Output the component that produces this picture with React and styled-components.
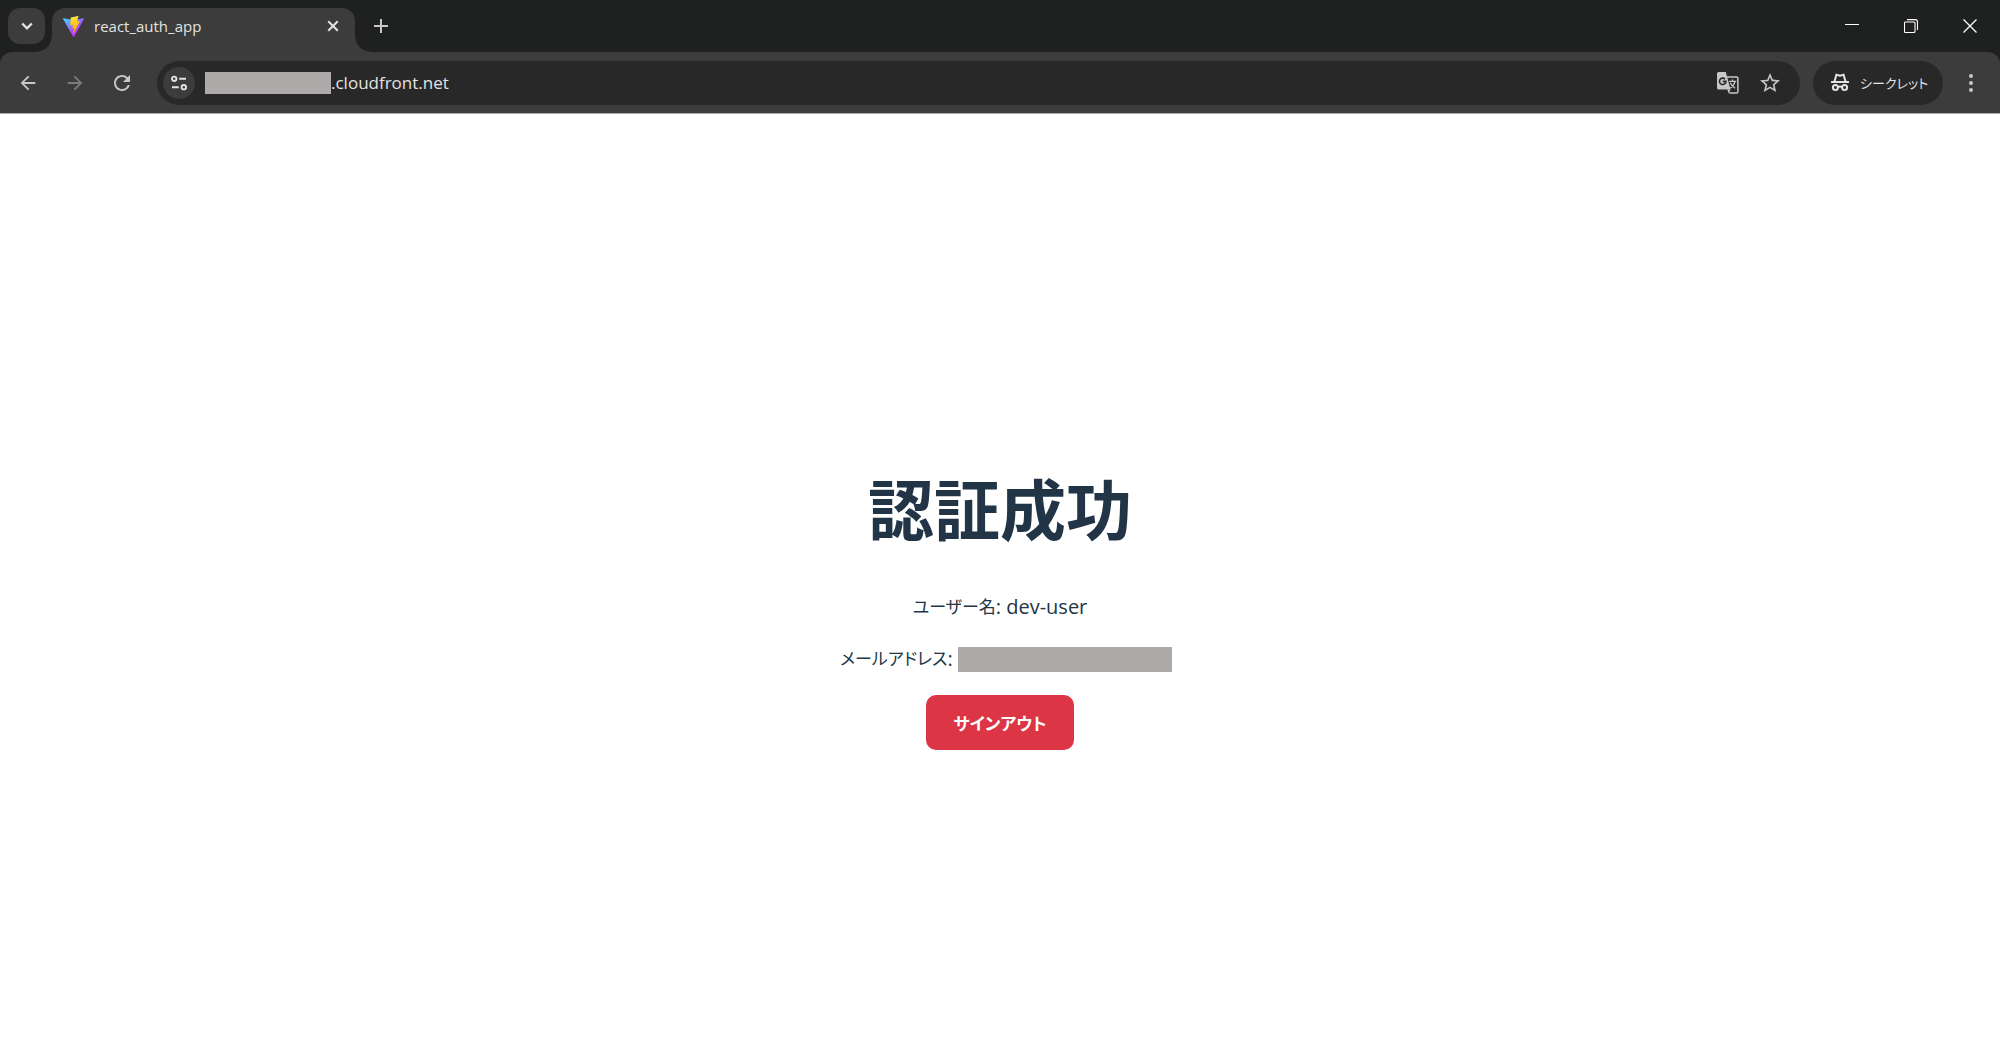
import React from 'react'
import styled, { createGlobalStyle } from 'styled-components'
import { MdArrowBack, MdArrowForward, MdRefresh, MdStarBorder } from 'react-icons/md'

const colors = {
  strip: '#1f2120',
  toolbar: '#3c3c3c',
  field: '#282828',
  icon: '#c7c7c7',
  light: '#e3e3e3',
  redacted: '#aeaaa9',
  text: '#213547',
  danger: '#dc3545',
}

const ViteLogo = () => (
  <svg width="21" height="21" viewBox="0 0 256 257" aria-hidden="true">
    <defs>
      <linearGradient id="viteBack" x1="-.828%" x2="57.636%" y1="7.652%" y2="78.411%">
        <stop offset="0%" stopColor="#41D1FF" />
        <stop offset="100%" stopColor="#BD34FE" />
      </linearGradient>
      <linearGradient id="viteBolt" x1="43.376%" x2="50.316%" y1="2.242%" y2="89.03%">
        <stop offset="0%" stopColor="#FFEA83" />
        <stop offset="8.333%" stopColor="#FFDD35" />
        <stop offset="100%" stopColor="#FFA800" />
      </linearGradient>
    </defs>
    <path fill="url(#viteBack)" d="M255.153 37.938 134.897 252.976c-2.483 4.44-8.862 4.466-11.382.048L.875 37.958c-2.746-4.814 1.371-10.646 6.827-9.67l120.385 21.517a6.537 6.537 0 0 0 2.322-.004l117.867-21.483c5.438-.991 9.574 4.796 6.877 9.62Z" />
    <path fill="url(#viteBolt)" d="M185.432.063 96.44 17.501a3.268 3.268 0 0 0-2.634 3.014l-5.474 92.456a3.268 3.268 0 0 0 3.997 3.378l24.777-5.718c2.318-.535 4.413 1.507 3.936 3.838l-7.361 36.047c-.495 2.426 1.782 4.5 4.151 3.78l15.304-4.649c2.372-.72 4.652 1.36 4.15 3.788l-11.698 56.621c-.732 3.542 3.979 5.473 5.943 2.437l1.313-2.028 72.516-144.72c1.215-2.423-.88-5.186-3.54-4.672l-25.505 4.922c-2.396.462-4.435-1.77-3.759-4.114l16.646-57.705c.677-2.35-1.37-4.583-3.769-4.113Z" />
  </svg>
)

const ChevronIcon = () => (
  <svg width="12" height="12" viewBox="0 0 12 12" fill="none" stroke={colors.light} strokeWidth="2.4">
    <path d="M1.2 3.5 6 8.3l4.8-4.8" />
  </svg>
)

const TabCloseIcon = () => (
  <svg width="12" height="12" viewBox="0 0 12 12" fill="none" stroke={colors.light} strokeWidth="2">
    <path d="m1.2 1.2 9.6 9.6m0-9.6-9.6 9.6" />
  </svg>
)

const PlusIcon = () => (
  <svg width="14" height="14" viewBox="0 0 14 14" fill="none" stroke={colors.icon} strokeWidth="2">
    <path d="M7 0v14M0 7h14" />
  </svg>
)

const MinimizeIcon = () => (
  <svg width="14" height="14" viewBox="0 0 14 14" fill="none" stroke="#fff">
    <path d="M0 5.5h14" />
  </svg>
)

const RestoreIcon = () => (
  <svg width="14" height="14" viewBox="0 0 14 14" fill="none" stroke="#fff" strokeWidth="1.1">
    <rect x=".5" y="3" width="10.5" height="10.5" rx="1" />
    <path d="M3 .6h8.2a2.3 2.3 0 0 1 2.3 2.3V11" />
  </svg>
)

const WindowCloseIcon = () => (
  <svg width="14" height="14" viewBox="0 0 14 14" fill="none" stroke="#fff" strokeWidth="1.3">
    <path d="m.5.5 13 13m0-13-13 13" />
  </svg>
)

const SiteInfoIcon = () => (
  <svg width="16" height="16" viewBox="0 0 16 16" fill="none" stroke={colors.light} strokeWidth="1.9">
    <circle cx="3.2" cy="3.8" r="2.2" />
    <path d="M8.2 3.8H15M1 12.2h6.8" />
    <circle cx="12.8" cy="12.2" r="2.2" />
  </svg>
)

const TranslateIcon = () => (
  <svg width="22" height="22" viewBox="0 0 22 22" fill="none">
    <path d="M10 4.9h9.6a1.3 1.3 0 0 1 1.3 1.3v13.5a1.3 1.3 0 0 1-1.3 1.3h-7.4" stroke={colors.icon} strokeWidth="1.5" />
    <path d="M1.6 0h7.2l4.7 17.4H1.6A1.6 1.6 0 0 1 0 15.8V1.6A1.6 1.6 0 0 1 1.6 0Z" fill={colors.icon} />
    <path d="M10.3 17.4h3.2l-1.900 4Z" fill={colors.icon} />
    <path d="M8 7.1A3.2 3.2 0 1 0 8.900 9.400H5.800" stroke={colors.field} strokeWidth="1.6" />
    <path d="M12 9.300h7.300M15.500 7.500v1.800M18 9.300c-.7 2.900-2.500 5.300-4.800 6.900M13.200 10.700c1 2.200 2.600 4 4.900 5.600" stroke={colors.icon} strokeWidth="1.3" />
  </svg>
)

const IncognitoIcon = () => (
  <svg width="20" height="20" viewBox="0 0 20 20" fill="none" stroke={colors.light} strokeWidth="2">
    <path d="M1 9h18" />
    <path d="M4.500 8.500 6.400 1.700l3.600.9 3.600-.9 1.900 6.800" />
    <circle cx="5.400" cy="14.500" r="2.500" />
    <circle cx="14.600" cy="14.500" r="2.500" />
    <path d="M7.800 14q2.200-1.200 4.400 0" />
  </svg>
)

const MenuIcon = () => (
  <svg width="6" height="20" viewBox="0 0 6 20" fill={colors.icon}>
    <circle cx="3" cy="3" r="2" />
    <circle cx="3" cy="10" r="2" />
    <circle cx="3" cy="17" r="2" />
  </svg>
)

const App = () => {
  return (
    <Browser>
      <GlobalStyle />
      <Chrome>
        <TabStrip>
          <TabSearch aria-label="タブを検索"><ChevronIcon /></TabSearch>
          <Tab>
            <ViteLogo />
            <TabTitle>react_auth_app</TabTitle>
            <IconButton $size={24} aria-label="タブを閉じる"><TabCloseIcon /></IconButton>
          </Tab>
          <NewTab $size={36} aria-label="新しいタブ"><PlusIcon /></NewTab>
          <WindowControls>
            <WindowButton aria-label="最小化"><MinimizeIcon /></WindowButton>
            <WindowButton aria-label="元に戻す"><RestoreIcon /></WindowButton>
            <WindowButton aria-label="閉じる"><WindowCloseIcon /></WindowButton>
          </WindowControls>
        </TabStrip>

        <Toolbar>
          <NavButtons>
            <IconButton $size={36} aria-label="戻る"><MdArrowBack size={22} /></IconButton>
            <IconButton $size={36} aria-label="進む" disabled><MdArrowForward size={22} /></IconButton>
            <IconButton $size={36} aria-label="再読み込み"><MdRefresh size={24} /></IconButton>
          </NavButtons>
          <AddressBar>
            <SiteInfo $size={32} aria-label="サイト情報"><SiteInfoIcon /></SiteInfo>
            <Redacted $width={126} $height={22} />
            <AddressInput aria-label="アドレス" defaultValue=".cloudfront.net" />
            <IconButton $size={42} aria-label="翻訳"><TranslateIcon /></IconButton>
            <IconButton $size={42} aria-label="ブックマーク"><MdStarBorder size={24} /></IconButton>
          </AddressBar>
          <IncognitoChip>
            <IncognitoIcon />
            <span>シークレット</span>
          </IncognitoChip>
          <IconButton $size={36} aria-label="メニュー"><MenuIcon /></IconButton>
        </Toolbar>
      </Chrome>

      <Page>
        <Heading>認証成功</Heading>
        <Detail><Kana>ユーザー名</Kana>: dev-user</Detail>
        <Detail>
          <Kana>メールアドレス</Kana>:
          <Email $width={214} $height={25} />
        </Detail>
        <SignOut>サインアウト</SignOut>
      </Page>
    </Browser>
  )
}

const GlobalStyle = createGlobalStyle`
  * {
    box-sizing: border-box;
  }
  body {
    margin: 0;
    background: #fff;
    font-family: 'Open Sans', 'Noto Sans CJK JP', sans-serif;
    font-feature-settings: 'palt';
  }
  button, input {
    margin: 0;
    padding: 0;
    border: 0;
    background: none;
    font: inherit;
    font-feature-settings: inherit;
  }
  svg {
    display: block;
    flex: none;
  }
`

const Browser = styled.div`
  display: flex;
  flex-direction: column;
  min-height: 100vh;
`

const Chrome = styled.header`
  background: ${colors.strip};
  border-bottom: 1px solid #aaa;
`

const TabStrip = styled.div`
  display: flex;
  align-items: stretch;
  height: 52px;
  padding: 8px 0 0 8px;
`

const IconButton = styled.button`
  display: flex;
  flex: none;
  align-items: center;
  justify-content: center;
  width: ${({ $size }) => $size}px;
  height: ${({ $size }) => $size}px;
  border-radius: 50%;
  color: ${colors.icon};

  &:disabled {
    color: #7b7b7b;
  }
`

const TabSearch = styled.button`
  display: flex;
  align-items: center;
  justify-content: center;
  width: 37px;
  height: 36px;
  border-radius: 12px;
  background: ${colors.toolbar};
`

const Tab = styled.div`
  position: relative;
  display: flex;
  align-items: center;
  width: 303px;
  margin-left: 7px;
  padding: 0 10px 8px 11px;
  border-radius: 13px 13px 0 0;
  background: ${colors.toolbar};

  /* flared feet on both sides */
  &::before,
  &::after {
    content: '';
    position: absolute;
    bottom: 0;
    width: 15px;
    height: 15px;
  }
  &::before {
    right: 100%;
    background: radial-gradient(circle at 0 0, transparent 14px, ${colors.toolbar} 15px);
  }
  &::after {
    left: 100%;
    background: radial-gradient(circle at 100% 0, transparent 14px, ${colors.toolbar} 15px);
  }
`

const TabTitle = styled.span`
  flex: 1;
  padding-left: 10px;
  color: ${colors.light};
  font-size: 15px;
  line-height: 20px;
`

const NewTab = styled(IconButton)`
  margin-left: 8px;
`

const WindowControls = styled.div`
  display: flex;
  height: 36px;
  margin-left: auto;
  padding-right: 1px;
`

const WindowButton = styled.button`
  display: flex;
  align-items: center;
  justify-content: center;
  width: 59px;
`

const Toolbar = styled.nav`
  display: flex;
  align-items: center;
  height: 61px;
  padding: 0 11px 0 10px;
  border-radius: 12px 12px 0 0;
  background: ${colors.toolbar};
`

const NavButtons = styled.div`
  display: flex;
  gap: 11px;
  margin-right: 17px;
`

const AddressBar = styled.div`
  display: flex;
  flex: 1;
  align-items: center;
  height: 44px;
  padding: 0 9px 0 6px;
  border-radius: 22px;
  background: ${colors.field};
`

const SiteInfo = styled(IconButton)`
  margin-right: 10px;
  background: ${colors.toolbar};
`

const AddressInput = styled.input`
  flex: 1;
  min-width: 0;
  color: ${colors.light};
  font-size: 17px;
  line-height: 24px;
  outline: none;
`

const Redacted = styled.span`
  display: inline-block;
  flex: none;
  width: ${({ $width }) => $width}px;
  height: ${({ $height }) => $height}px;
  background: ${colors.redacted};
`

const IncognitoChip = styled.button`
  display: flex;
  align-items: center;
  gap: 10px;
  width: 130px;
  height: 44px;
  margin: 0 10px 0 13px;
  padding-left: 17px;
  border-radius: 22px;
  background: ${colors.field};
  color: ${colors.light};
  font-size: 13px;
  white-space: nowrap;
`

const Page = styled.main`
  display: flex;
  flex: 1;
  flex-direction: column;
  align-items: center;
  justify-content: center;
  padding-top: 2px;
  color: ${colors.text};
`

const Heading = styled.h1`
  margin: 45px 0 46px;
  font-size: 66px;
  line-height: 72px;
  font-weight: 700;
  font-feature-settings: normal;
`

const Detail = styled.p`
  display: flex;
  align-items: center;
  margin: 0 0 20px;
  font-size: 20px;
  line-height: 32px;
  white-space: pre;
`

const Kana = styled.span`
  font-size: 17px;
`

/* the block runs a little past the address it hides */
const Email = styled(Redacted)`
  margin: 0 -12px 0 5px;
`

const SignOut = styled.button`
  width: 148px;
  height: 55px;
  border-radius: 10px;
  background: ${colors.danger};
  color: #fff;
  font-size: 17px;
  font-weight: 700;
`

export default App
